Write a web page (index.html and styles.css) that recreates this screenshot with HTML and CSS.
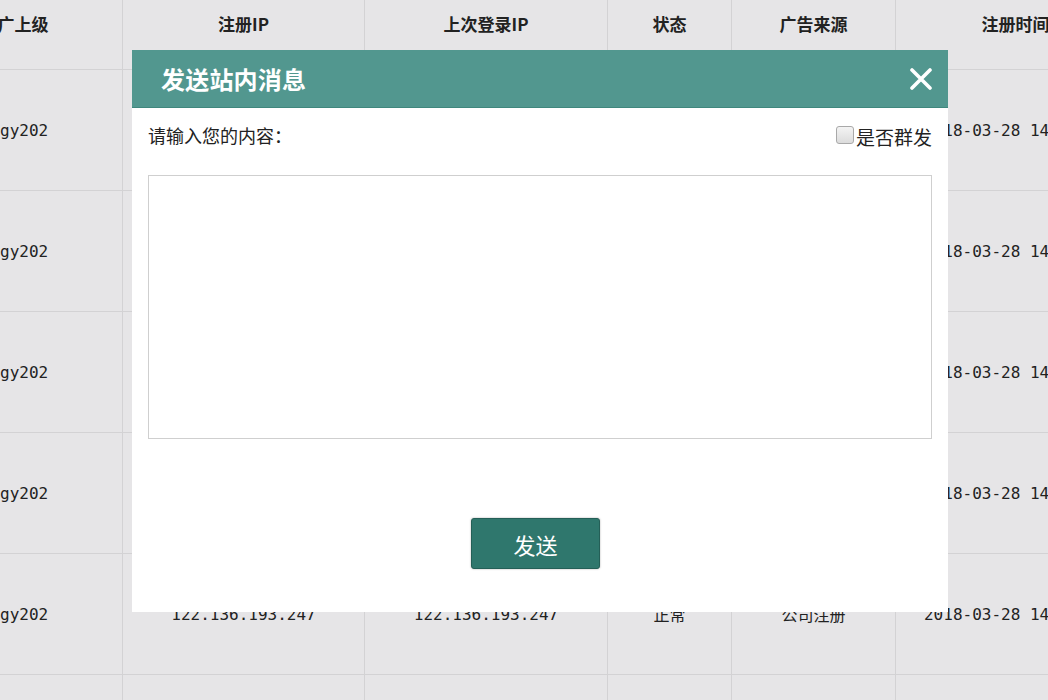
FILE: index.html
```html
<!DOCTYPE html>
<html lang="zh-CN">
<head>
<meta charset="utf-8">
<title>发送站内消息</title>
<link rel="stylesheet" href="styles.css">
</head>
<body>
<div class="viewport">
  <div class="scroller">
    <table class="grid">
      <colgroup>
        <col class="c1"><col class="c2"><col class="c3"><col class="c4"><col class="c5"><col class="c6">
      </colgroup>
      <thead>
        <tr><th>推广上级</th><th>注册IP</th><th>上次登录IP</th><th>状态</th><th>广告来源</th><th>注册时间</th></tr>
      </thead>
      <tbody>
        <tr><td>ltgy202</td><td>122.136.193.247</td><td>122.136.193.247</td><td>正常</td><td>公司注册</td><td>2018-03-28 14:25:36</td></tr>
        <tr><td>ltgy202</td><td>122.136.193.247</td><td>122.136.193.247</td><td>正常</td><td>公司注册</td><td>2018-03-28 14:25:36</td></tr>
        <tr><td>ltgy202</td><td>122.136.193.247</td><td>122.136.193.247</td><td>正常</td><td>公司注册</td><td>2018-03-28 14:25:36</td></tr>
        <tr><td>ltgy202</td><td>122.136.193.247</td><td>122.136.193.247</td><td>正常</td><td>公司注册</td><td>2018-03-28 14:25:36</td></tr>
        <tr><td>ltgy202</td><td>122.136.193.247</td><td>122.136.193.247</td><td>正常</td><td>公司注册</td><td>2018-03-28 14:25:36</td></tr>
        <tr><td>ltgy202</td><td>122.136.193.247</td><td>122.136.193.247</td><td>正常</td><td>公司注册</td><td>2018-03-28 14:25:36</td></tr>
      </tbody>
    </table>
  </div>

  <div class="modal">
    <div class="modal-head">
      <span class="modal-title">发送站内消息</span>
      <svg class="close" width="22" height="22" viewBox="0 0 22 22" aria-label="关闭">
        <path d="M2 2 L20 20 M20 2 L2 20" stroke="#fff" stroke-width="3.6" stroke-linecap="round" fill="none"/>
      </svg>
    </div>
    <div class="modal-body">
      <div class="toolbar">
        <span class="prompt">请输入您的内容：</span>
        <label class="group">
          <input type="checkbox" class="chk">
          <span>是否群发</span>
        </label>
      </div>
      <textarea class="content"></textarea>
      <div class="actions">
        <button class="send" type="button">发送</button>
      </div>
    </div>
  </div>
</div>
</body>
</html>
```
FILE: styles.css
```css
html, body {
  margin: 0;
  padding: 0;
}
body {
  background: #e6e5e7;
  font-family: "Noto Sans CJK SC", sans-serif;
  color: #222;
}
.viewport {
  position: relative;
  width: 1048px;
  height: 700px;
  overflow: hidden;
  background: #e6e5e7;
}
.scroller {
  margin: -24px 0 0 -94px;
}
.grid {
  border-collapse: collapse;
  table-layout: fixed;
  width: 1229px;
  background: #e6e5e7;
}
.c1 { width: 216px; }
.c2 { width: 242px; }
.c3 { width: 243px; }
.c4 { width: 124px; }
.c5 { width: 164px; }
.c6 { width: 240px; }
.grid th,
.grid td {
  border: 1px solid #d3d2d4;
  text-align: center;
  vertical-align: middle;
  padding: 0;
  white-space: nowrap;
  overflow: hidden;
}
.grid th {
  height: 92px;
  font-size: 17px;
  font-weight: bold;
  color: #222;
}
.grid td {
  height: 120px;
  font-family: "DejaVu Sans Mono", "Noto Sans CJK SC", monospace;
  font-size: 16px;
  color: #222;
}

.modal {
  position: absolute;
  left: 132px;
  top: 50px;
  width: 816px;
  height: 562px;
  background: #fff;
  display: flex;
  flex-direction: column;
}
.modal-head {
  height: 57px;
  background: #52978f;
  border-bottom: 1px solid #3f877d;
  display: flex;
  align-items: center;
  justify-content: space-between;
  padding: 0 16px 0 29px;
}
.modal-title {
  color: #fff;
  font-size: 24px;
  font-weight: bold;
  line-height: 1;
  letter-spacing: 0.2px;
}
.close {
  display: block;
}
.modal-body {
  padding: 0 16px;
  display: flex;
  flex-direction: column;
}
.toolbar {
  display: flex;
  justify-content: space-between;
  align-items: center;
  height: 26px;
  margin-top: 14px;
}
.prompt {
  font-size: 18px;
  line-height: 26px;
  color: #222;
}
.group {
  display: flex;
  align-items: center;
  font-size: 19px;
  color: #222;
  line-height: 26px;
}
.group span {
  margin-top: 4px;
}
.chk {
  appearance: none;
  -webkit-appearance: none;
  width: 18px;
  height: 18px;
  margin: 0 2px 0 0;
  border: 1px solid #a9a9a9;
  border-radius: 3px;
  background: linear-gradient(#f4f4f4, #dcdcdc);
  box-sizing: border-box;
}
.content {
  display: block;
  box-sizing: border-box;
  width: 784px;
  height: 264px;
  margin-top: 27px;
  border: 1px solid #cfcfcf;
  resize: none;
  outline: none;
  padding: 4px;
  font-family: "Noto Sans CJK SC", sans-serif;
}
.actions {
  display: flex;
  padding-left: 323px;
  margin-top: 79px;
}
.send {
  width: 129px;
  height: 51px;
  box-sizing: border-box;
  background: #2f776d;
  border: 1px solid #245f57;
  border-radius: 3px;
  box-shadow: 0 0 2px rgba(0, 0, 0, 0.35);
  color: #fff;
  font-family: "Noto Sans CJK SC", sans-serif;
  font-size: 22px;
  line-height: 1;
  padding: 0;
}
```
